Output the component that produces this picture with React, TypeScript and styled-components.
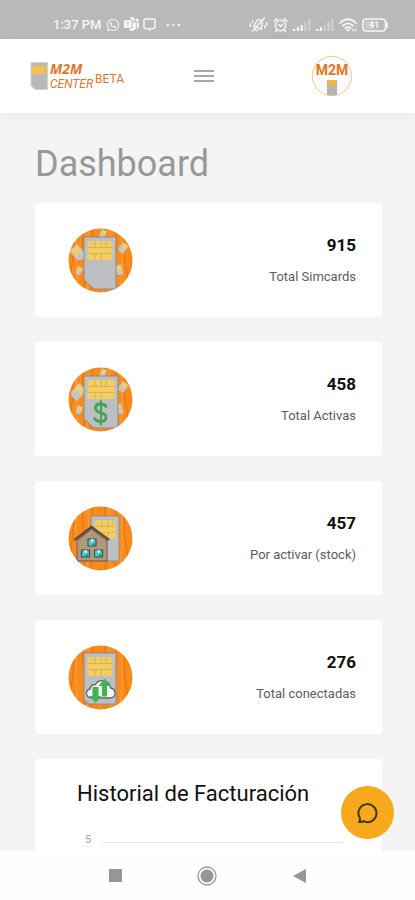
import React from "react";
import styled, { createGlobalStyle } from "styled-components";
import { FaWhatsapp } from "react-icons/fa";
import { BsMicrosoftTeams } from "react-icons/bs";

const GlobalStyle = createGlobalStyle`
  *, *::before, *::after { box-sizing: border-box; }
  body {
    margin: 0;
    background: #f4f4f4;
    font-family: Roboto, "Liberation Sans", sans-serif;
  }
  button { font: inherit; padding: 0; border: 0; background: none; cursor: pointer; }
`;

const Screen = styled.div`
  height: 100vh;
  display: flex;
  flex-direction: column;
  position: relative;
  overflow: hidden;
`;

const StatusBar = styled.div`
  flex: none;
  height: 39px;
  padding: 10px 26px 0 53px;
  display: flex;
  align-items: center;
  justify-content: space-between;
  background: #b9b9b9;
  color: #f6f6f6;
`;

const StatusGroup = styled.div<{ $gap: number }>`
  display: flex;
  align-items: center;
  gap: ${(p) => p.$gap}px;
`;

const Clock = styled.span`
  font-size: 13px;
  line-height: 16px;
  font-weight: 500;
`;

const Header = styled.header`
  flex: none;
  height: 74px;
  padding: 0 37px 0 30px;
  display: grid;
  grid-template-columns: 1fr auto 1fr;
  align-items: center;
  background: #ffffff;
  box-shadow: 0 2px 14px rgba(0, 0, 0, 0.05);
  z-index: 1;
`;

const Brand = styled.a`
  display: flex;
  align-items: center;
  gap: 2px;
  color: #df762c;
  text-decoration: none;
`;

const BrandName = styled.span`
  display: flex;
  flex-direction: column;
`;

const BrandTop = styled.span`
  font: italic 700 14px/16px "Open Sans", sans-serif;
`;

const BrandBottom = styled.span`
  font: italic 400 12px/14px Roboto, sans-serif;
`;

const Beta = styled.span`
  font-size: 12px;
  line-height: 14px;
  padding-top: 5px;
`;

const MenuButton = styled.button`
  display: flex;
  flex-direction: column;
  justify-content: center;
  gap: 3px;
  width: 20px;
  height: 24px;
`;

const MenuLine = styled.span`
  height: 2px;
  background: #a6a6ac;
`;

const AvatarButton = styled.button`
  justify-self: end;
  margin-right: 25px;
  width: 42px;
  height: 42px;
`;

const Main = styled.main`
  flex: 1;
  min-height: 0;
  overflow: hidden;
  padding: 28px 33px 0 35px;
  background: #f4f4f4;
`;

const Title = styled.h1`
  margin: 0 0 16px;
  font-size: 36px;
  line-height: 46px;
  font-weight: 400;
  color: #989898;
`;

const Cards = styled.div`
  display: flex;
  flex-direction: column;
  gap: 25px;
`;

const Card = styled.section`
  height: 114px;
  padding: 0 26px 0 33px;
  display: flex;
  align-items: center;
  justify-content: space-between;
  background: #ffffff;
  border-radius: 4px;
`;

const Stat = styled.div`
  display: flex;
  flex-direction: column;
  gap: 13px;
  text-align: right;
`;

const StatValue = styled.strong`
  font-size: 17px;
  line-height: 20px;
  font-weight: 700;
  color: #101010;
`;

const StatLabel = styled.span`
  font-size: 13px;
  line-height: 18px;
  color: #5c5c5c;
`;

const ChartCard = styled.section`
  height: 320px;
  padding: 22px 38px 0 42px;
  background: #ffffff;
  border-radius: 4px;
`;

const ChartTitle = styled.h2`
  margin: 0 0 26px;
  font-size: 22px;
  line-height: 26px;
  font-weight: 400;
  color: #111111;
`;

const AxisRow = styled.div`
  display: flex;
  align-items: center;
  gap: 9px;
  padding-left: 8px;
`;

const AxisLabel = styled.span`
  font-size: 11px;
  line-height: 14px;
  color: #a3a3a3;
`;

const GridLine = styled.span`
  flex: 1;
  height: 1px;
  margin-top: 5px;
  background: #ececec;
`;

const ChatButton = styled.button`
  position: absolute;
  right: 21px;
  bottom: 61px;
  width: 53px;
  height: 53px;
  border-radius: 50%;
  display: flex;
  align-items: center;
  justify-content: center;
  background: #f7a91e;
  z-index: 2;
`;

const NavBar = styled.nav`
  flex: none;
  height: 49px;
  padding: 0 70px;
  display: grid;
  grid-template-columns: repeat(3, 1fr);
  align-items: center;
  justify-items: center;
  background: #fefefe;
`;

const NavButton = styled.button`
  width: 32px;
  height: 32px;
  display: flex;
  align-items: center;
  justify-content: center;
`;

const Message = () => (
  <svg width="13" height="13" viewBox="0 0 13 13" fill="none" stroke="currentColor" strokeWidth="1.5">
    <path d="M2.3 1h8.4Q12 1 12 2.3v6.9q0 1.200-1.300 1.200H8l-1.500 1.600L5 10.400H2.300Q1 10.400 1 9.200V2.300Q1 1 2.300 1Z" />
  </svg>
);

const Dots = () => (
  <svg width="15" height="4" viewBox="0 0 15 4" fill="currentColor">
    <circle cx="2" cy="2" r="1.200" />
    <circle cx="7.500" cy="2" r="1.200" />
    <circle cx="13" cy="2" r="1.200" />
  </svg>
);

const Muted = () => (
  <svg width="19" height="17" viewBox="0 0 19 17" fill="none" stroke="currentColor" strokeWidth="1.4" strokeLinecap="round" strokeLinejoin="round">
    <g transform="rotate(20 9.500 8.500)">
      <path d="M5.300 12c1-1.400.9-2.400 1-4.200.200-2.800 1.400-4.300 3.300-4.300s3 1.500 3.200 4.300c.1 1.800 0 2.800 1 4.200ZM8.300 14.300q1.300 1 2.600 0" />
    </g>
    <path d="M3.500 15.200 15.500 1.800M1.300 7.500v3M3.500 4.500v2M15.800 9.500v2.500M17.800 6.500v3" />
  </svg>
);

const Alarm = () => (
  <svg width="15" height="16" viewBox="0 0 15 16" fill="none" stroke="currentColor" strokeWidth="1.5" strokeLinecap="round">
    <circle cx="7.500" cy="8.500" r="5.200" />
    <path d="M1 4.200 4 1.700M14 4.200 11 1.700M3.800 13l-1.200 1.500M11.200 13l1.200 1.500M5.500 7.500l2 2 2.300-2.300" />
  </svg>
);

const Signal = ({ strength }: { strength: number }) => (
  <svg width="18" height="12" viewBox="0 0 18 12" fill="currentColor">
    {[2, 4, 6, 9, 12].map((h, i) => (
      <rect key={h} x={i * 3.8} y={12 - h} width="2.200" height={h} opacity={i < strength ? 1 : 0.4} />
    ))}
  </svg>
);

const Wifi = () => (
  <svg width="18" height="14" viewBox="0 0 18 14" fill="none" stroke="currentColor" strokeWidth="1.700" strokeLinecap="round">
    <path d="M1 5Q9-2.500 17 5M3.700 7.800Q9 3 14.300 7.800M6.300 10.200q2.700-2.200 5.400 0" />
    <path d="m9 13-1.200-1.200h2.400ZM14 11v2M16.500 11v2" strokeWidth="1.200" />
  </svg>
);

const Battery = () => (
  <svg width="27" height="14" viewBox="0 0 27 14">
    <rect x="1" y="1" width="22.500" height="12" rx="3" fill="none" stroke="currentColor" strokeWidth="1.500" />
    <rect x="3" y="3" width="8" height="8" rx="1" fill="currentColor" opacity=".35" />
    <path d="M25 5v4" stroke="currentColor" strokeWidth="1.800" strokeLinecap="round" />
    <text x="12.300" y="10.200" fontSize="9" fontWeight="700" textAnchor="middle" fill="currentColor">41</text>
  </svg>
);

const BrandSim = () => (
  <svg width="18" height="28" viewBox="0 0 18 28">
    <path d="M1 .5h16.500v27H5l-4-4Z" fill="#b9b9bb" stroke="#d2d2d2" />
    <rect x="2" y="3.500" width="14" height="9" rx="1" fill="#efbd50" />
    <path d="M2 8h14M7 4v8M12 4v8" stroke="#f6ce72" strokeWidth=".6" />
  </svg>
);

const Avatar = () => (
  <svg width="42" height="42" viewBox="0 0 42 42">
    <defs>
      <clipPath id="avatar-clip"><circle cx="21" cy="21" r="19.500" /></clipPath>
    </defs>
    <circle cx="21" cy="21" r="19.700" fill="#fafafa" stroke="#ecca8d" strokeWidth="1" />
    <g clipPath="url(#avatar-clip)">
      <rect x="16" y="25" width="10" height="17" fill="#b5b5b5" />
      <rect x="17" y="25" width="8" height="6" fill="#f0b544" />
    </g>
    <text x="21" y="20" textAnchor="middle" fontFamily="Roboto, sans-serif" fontSize="14" fontWeight="700" fill="#e17722">M2M</text>
  </svg>
);

type Kind = "sims" | "active" | "stock" | "online";

const MiniSim = ({ x, y, turn, size = 1 }: { x: number; y: number; turn: number; size?: number }) => (
  <g transform={`translate(${x} ${y}) rotate(${turn}) scale(${size})`}>
    <path d="M-3.500-5h7V5h-5l-2-2Z" fill="#c6c5c2" />
    <rect x="-2.500" y="-4" width="5" height="4" fill="#f3cf63" />
  </g>
);

const SimBody = ({ x, y, width, height, cut }: { x: number; y: number; width: number; height: number; cut: number }) => (
  <g transform={`translate(${x} ${y})`}>
    <path
      d={`M1 0h${width - 2}q1 0 1 1v${height - 2}q0 1-1 1H${cut + 1}L0 ${height - cut}V1Q0 0 1 0Z`}
      fill="#bdbec2"
      stroke="#8b898b"
      strokeWidth=".9"
    />
    <rect x="3.500" y="4" width={width - 7} height="19" rx="1.500" fill="#f3cc62" />
    <path
      d={`M4 10.500h${width - 8}M4 16.500h${width - 8}M11 4v6.500M17 4v6.500M22 4v6.500M11 16.500V23M17 16.500V23`}
      stroke="#c9a650"
      strokeWidth=".7"
      fill="none"
    />
  </g>
);

const Box = ({ x, y }: { x: number; y: number }) => (
  <g transform={`translate(${x} ${y})`}>
    <path d="M0 0h8v7H0Z" fill="#55c4c9" stroke="#23545d" strokeWidth="1.100" />
    <path d="M3 0h2.500v3H3Z" fill="#bdecea" />
    <path d="M4.500 5.200H7" stroke="#245661" />
  </g>
);

const Badge = ({ kind }: { kind: Kind }) => (
  <svg width="65" height="65" viewBox="0 0 65 65" aria-hidden="true">
    <defs>
      <clipPath id={`clip-${kind}`}><circle cx="32.500" cy="32.500" r="32" /></clipPath>
    </defs>
    <g clipPath={`url(#clip-${kind})`}>
      <rect width="65" height="65" fill="#f98a1c" />
      <path
        d="M4 0q3 20 0 36t1 29M16 0q-3 12 0 25t-1 40M24 0q2 30-1 65M37 0q-2 20 1 65M47 0q3 18 0 34t2 31M58 0q-4 24 0 39t-1 26"
        fill="none" stroke="#dc6d0e" strokeWidth="1.300" opacity=".6"
      />
      <path
        d="M9 0q-2 28 1 65M20 0q2 35-1 65M42 0q-3 30 1 65M53 0q3 35-1 65"
        fill="none" stroke="#ffa848" strokeWidth="1.500" opacity=".6"
      />
      {(kind === "sims" || kind === "active") && (
        <>
          <MiniSim x={10} y={25} turn={kind === "sims" ? -40 : 40} size={1.5} />
          <MiniSim x={35} y={6} turn={20} size={0.8} />
          <MiniSim x={55} y={20} turn={35} />
          <MiniSim x={51} y={42} turn={-15} />
          <MiniSim x={11} y={43} turn={25} size={0.8} />
          <SimBody x={16} y={9} width={kind === "sims" ? 32 : 34} height={52} cut={9} />
        </>
      )}
      {kind === "active" && (
        <g fill="none" stroke="#42a451" strokeLinecap="round">
          <path d="M38 39.500q-1.500-2.500-5.500-2.500-5 0-5 4 0 3.500 5.200 4.700 5.300 1.300 5.300 4.800 0 4-5.500 4-4.200 0-6-3" strokeWidth="2.800" />
          <path d="M33 34v23.500" strokeWidth="2" />
        </g>
      )}
      {kind === "stock" && (
        <>
          <SimBody x={23} y={10} width={28} height={45} cut={5} />
          <path d="M9 35 23.500 23 39 35v20H9Z" fill="#b39779" stroke="#68584f" />
          <path d="M6.500 34 23.500 21 41 34" fill="none" stroke="#574c4c" strokeWidth="2.500" />
          <Box x={20} y={33} />
          <Box x={13.500} y={44} />
          <Box x={26.500} y={44} />
        </>
      )}
      {kind === "online" && (
        <>
          <SimBody x={16} y={8} width={32} height={51} cut={4} />
          <path
            d="M25 53h17q5.500-.5 5-5.500-.5-4-4.500-4.500-1-6-6-7-6-1.500-9 3.500-5 0-5.500 4.500-4 1-3.500 5 .7 4 6.500 4Z"
            fill="#f3f5f3" stroke="#60656a" strokeWidth="1.300"
          />
          <path d="M24.500 42h6v9h3l-6 7-6-7h3ZM34 51.500V41h-3.500l6-7.500 6 7.500H39v10.500Z" fill="#43b34f" />
        </>
      )}
    </g>
  </svg>
);

const ChatIcon = () => (
  <svg width="24" height="24" viewBox="0 0 24 24" fill="none" stroke="#46340f" strokeWidth="2" strokeLinecap="round" strokeLinejoin="round">
    <path d="M3 21c1-1 1.300-2.500.9-4A9 9 0 1 1 7.500 20.200C6 20.800 4.500 21 3 21Z" />
  </svg>
);

const stats: { kind: Kind; value: number; label: string }[] = [
  { kind: "sims", value: 915, label: "Total Simcards" },
  { kind: "active", value: 458, label: "Total Activas" },
  { kind: "stock", value: 457, label: "Por activar (stock)" },
  { kind: "online", value: 276, label: "Total conectadas" },
];

export default function App() {
  return (
    <Screen>
      <GlobalStyle />
      <StatusBar>
        <StatusGroup $gap={10}>
          <StatusGroup $gap={4}>
            <Clock>1:37 PM</Clock>
            <FaWhatsapp size={14} />
            <BsMicrosoftTeams size={15} />
            <Message />
          </StatusGroup>
          <Dots />
        </StatusGroup>
        <StatusGroup $gap={5}>
          <Muted />
          <Alarm />
          <Signal strength={3} />
          <Signal strength={2} />
          <Wifi />
          <Battery />
        </StatusGroup>
      </StatusBar>
      <Header>
        <Brand href="#">
          <BrandSim />
          <BrandName>
            <BrandTop>M2M</BrandTop>
            <BrandBottom>CENTER</BrandBottom>
          </BrandName>
          <Beta>BETA</Beta>
        </Brand>
        <MenuButton aria-label="Menú">
          <MenuLine />
          <MenuLine />
          <MenuLine />
        </MenuButton>
        <AvatarButton aria-label="Perfil">
          <Avatar />
        </AvatarButton>
      </Header>
      <Main>
        <Title>Dashboard</Title>
        <Cards>
          {stats.map((s) => (
            <Card key={s.kind}>
              <Badge kind={s.kind} />
              <Stat>
                <StatValue>{s.value}</StatValue>
                <StatLabel>{s.label}</StatLabel>
              </Stat>
            </Card>
          ))}
          <ChartCard>
            <ChartTitle>Historial de Facturación</ChartTitle>
            <AxisRow>
              <AxisLabel>5</AxisLabel>
              <GridLine />
            </AxisRow>
          </ChartCard>
        </Cards>
      </Main>
      <ChatButton aria-label="Chat">
        <ChatIcon />
      </ChatButton>
      <NavBar>
        <NavButton aria-label="Recientes">
          <svg width="13" height="13"><rect width="13" height="13" fill="#969696" /></svg>
        </NavButton>
        <NavButton aria-label="Inicio">
          <svg width="20" height="20" viewBox="0 0 20 20">
            <circle cx="10" cy="10" r="9" fill="none" stroke="#969696" strokeWidth="1.300" />
            <circle cx="10" cy="10" r="6.500" fill="#969696" />
          </svg>
        </NavButton>
        <NavButton aria-label="Atrás">
          <svg width="13" height="14" viewBox="0 0 13 14"><path d="M13 0v14L0 7Z" fill="#969696" /></svg>
        </NavButton>
      </NavBar>
    </Screen>
  );
}
